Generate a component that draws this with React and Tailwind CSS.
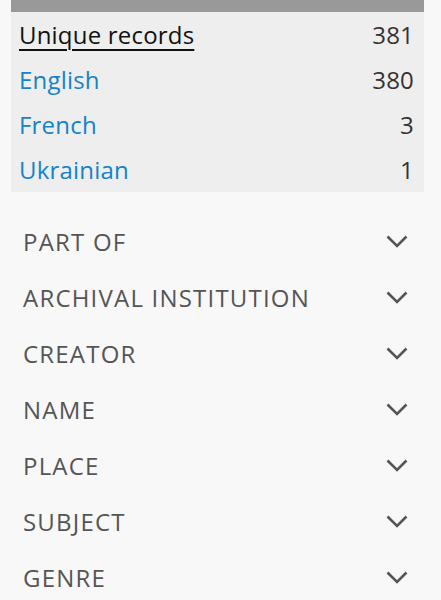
import React from 'react';

const languages = [
  { name: 'English', count: 380 },
  { name: 'French', count: 3 },
  { name: 'Ukrainian', count: 1 },
];

const facets = ['Part of', 'Archival institution', 'Creator', 'Name', 'Place', 'Subject', 'Genre'];

function Chevron() {
  return (
    <svg width="22" height="14" viewBox="0 0 22 14" fill="none" className="text-[#555]">
      <path d="M1.5 1.5 L11 11 L20.5 1.5" stroke="currentColor" strokeWidth="2.6" />
    </svg>
  );
}

export default function App() {
  return (
    <div className="min-h-[600px] bg-[#f8f8f8] font-['Open_Sans',sans-serif] text-[24px]">
      <div className="mx-[11px] w-[413px] bg-[#eeeeee] tracking-[0.2px]">
        <div className="h-[12px] bg-[#999999]" />
        <div className="flex h-[45px] items-center justify-between pl-2 pr-[10px]">
          <a href="#" className="text-[#111] underline underline-offset-[5px] decoration-2">Unique records</a>
          <span className="text-[#333]">381</span>
        </div>
        {languages.map((l) => (
          <div key={l.name} className="flex h-[45px] items-center justify-between pl-2 pr-[10px]">
            <a href="#" className="text-[#1483c9]">{l.name}</a>
            <span className="text-[#333]">{l.count}</span>
          </div>
        ))}
      </div>
      <div className="mt-[22px]">
        {facets.map((f) => (
          <div key={f} className="flex h-[56px] items-center justify-between pl-[23px] pr-[33px]">
            <span className="uppercase text-[#555] tracking-[1.2px]">{f}</span>
            <Chevron />
          </div>
        ))}
      </div>
    </div>
  );
}
